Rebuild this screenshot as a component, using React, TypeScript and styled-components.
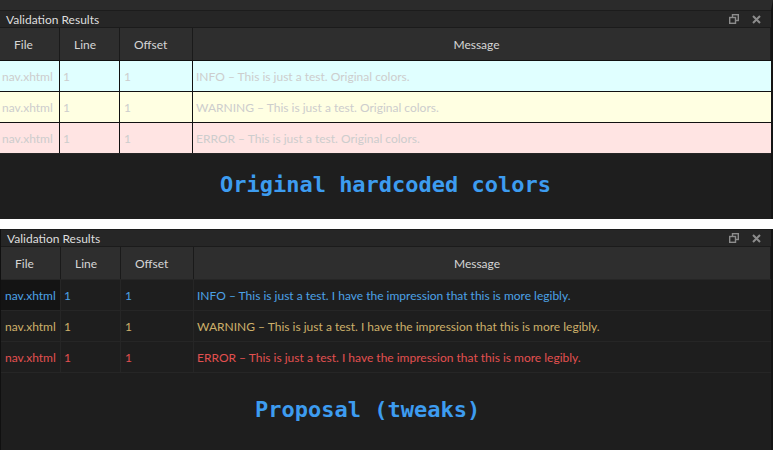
import styled, { createGlobalStyle } from "styled-components";

const GlobalStyle = createGlobalStyle`
  html, body {
    margin: 0;
    padding: 0;
    background: #ffffff;
  }
  body {
    font-family: "Lato", "Noto Sans", sans-serif;
  }
`;

type Level = "info" | "warning" | "error";

interface IRow {
  level: Level;
  label: string;
}

const rows: IRow[] = [
  { level: "info", label: "INFO" },
  { level: "warning", label: "WARNING" },
  { level: "error", label: "ERROR" },
];

const lightBg: Record<Level, string> = {
  info: "#e0ffff",
  warning: "#ffffe2",
  error: "#ffe4e3",
};

const darkFg: Record<Level, string> = {
  info: "#4ca2e6",
  warning: "#cdb06a",
  error: "#e25050",
};

const Page = styled.div`
  width: 773px;
  height: 450px;
  display: flex;
  flex-direction: column;
  gap: 10px;
  overflow: hidden;
`;

const Panel = styled.div<{ $h: number; $top?: boolean }>`
  height: ${(p) => p.$h}px;
  display: flex;
  flex-direction: column;
  background: #1e1e1e;
  border-left: ${(p) => (p.$top ? "0" : "1px solid #101010")};
  border-right: 2px solid #141414;
  border-top: ${(p) => (p.$top ? "10px solid #2b2b2b" : "0")};
  box-sizing: border-box;
`;

const TitleBar = styled.div`
  height: 16px;
  flex: none;
  display: flex;
  align-items: center;
  padding: 0 6px;
  background: #262626;
  border-top: 1px solid #1c1c1c;
  border-bottom: 1px solid #1b1b1b;
  color: #dedede;
  font-size: 12px;
`;

const TitleText = styled.span`
  flex: 1;
`;

const TitleIcons = styled.div`
  display: flex;
  gap: 13px;
  align-items: center;
  padding-right: 4px;
`;

const Grid = styled.div<{ $light: boolean }>`
  display: grid;
  grid-template-columns: 60px 60px 73px 1fr;
  grid-auto-rows: 31px;
  grid-template-rows: 32px;
  background: ${(p) => (p.$light ? "#111" : "#1e1e1e")};
`;

const HeadCell = styled.div<{ $center?: boolean }>`
  display: flex;
  align-items: center;
  justify-content: ${(p) => (p.$center ? "center" : "flex-start")};
  padding-left: ${(p) => (p.$center ? "0" : "14px")};
  padding-right: ${(p) => (p.$center ? "10px" : "0")};
  background: #2e2e2e;
  color: #d6d6d6;
  font-size: 12px;
  border-right: 1px solid #1a1a1a;
  &:last-child {
    border-right: 0;
  }
`;

const Cell = styled.div<{ $level: Level; $light: boolean; $pad: number; $focus?: boolean }>`
  display: flex;
  align-items: center;
  padding-left: ${(p) => p.$pad}px;
  font-size: 12px;
  white-space: nowrap;
  overflow: hidden;
  background: ${(p) =>
    p.$light ? lightBg[p.$level] : p.$focus ? "#141414" : "#1e1e1e"};
  color: ${(p) => (p.$light ? "#cdcdcd" : darkFg[p.$level])};
  border-right: 1px solid ${(p) => (p.$light ? "#111" : "#262626")};
  border-top: 1px solid ${(p) => (p.$light ? "#111" : "#262626")};
  &:nth-child(4n) {
    border-right: 0;
  }
`;

const Caption = styled.div<{ $left?: number }>`
  flex: 1;
  display: flex;
  align-items: center;
  justify-content: ${(p) => (p.$left ? "flex-start" : "center")};
  padding-left: ${(p) => p.$left ?? 0}px;
  padding-bottom: 5px;
  border-top: 1px solid #262626;
  font-family: "DejaVu Sans Mono", monospace;
  font-weight: bold;
  font-size: 22px;
  color: #3d9cf0;
`;

function RestoreIcon() {
  return (
    <svg width="10" height="10" viewBox="0 0 10 10" fill="none" stroke="#8c8c8c" strokeWidth="1.4">
      <rect x="3.5" y="0.7" width="5.8" height="5.8" />
      <rect x="0.7" y="3.5" width="5.8" height="5.8" fill="#262626" />
    </svg>
  );
}

function CloseIcon() {
  return (
    <svg width="9" height="9" viewBox="0 0 9 9" stroke="#8c8c8c" strokeWidth="2">
      <path d="M1 1 L8 8 M8 1 L1 8" />
    </svg>
  );
}

interface IPanelProps {
  light: boolean;
  message: string;
  caption: string;
  captionLeft?: number;
  height: number;
}

function ResultsPanel({ light, message, caption, captionLeft, height }: IPanelProps) {
  const pad = light ? 2 : 4;
  return (
    <Panel $h={height} $top={light}>
      <TitleBar>
        <TitleText>Validation Results</TitleText>
        <TitleIcons>
          <RestoreIcon />
          <CloseIcon />
        </TitleIcons>
      </TitleBar>
      <Grid $light={light}>
        <HeadCell>File</HeadCell>
        <HeadCell>Line</HeadCell>
        <HeadCell>Offset</HeadCell>
        <HeadCell $center>Message</HeadCell>
        {rows.map((row, i) => (
          <>
            <Cell key={row.level + "f"} $level={row.level} $light={light} $pad={pad} $focus={!light && i === 0}>
              nav.xhtml
            </Cell>
            <Cell key={row.level + "l"} $level={row.level} $light={light} $pad={3}>
              1
            </Cell>
            <Cell key={row.level + "o"} $level={row.level} $light={light} $pad={4}>
              1
            </Cell>
            <Cell key={row.level + "m"} $level={row.level} $light={light} $pad={3}>
              {row.label} – {message}
            </Cell>
          </>
        ))}
      </Grid>
      <Caption $left={captionLeft}>{caption}</Caption>
    </Panel>
  );
}

export default function App() {
  return (
    <>
      <GlobalStyle />
      <Page>
        <ResultsPanel
          light
          height={219}
          message="This is just a test. Original colors."
          caption="Original hardcoded colors"
        />
        <ResultsPanel
          light={false}
          height={221}
          message="This is just a test. I have the impression that this is more legibly."
          caption="Proposal (tweaks)"
          captionLeft={254}
        />
      </Page>
    </>
  );
}
